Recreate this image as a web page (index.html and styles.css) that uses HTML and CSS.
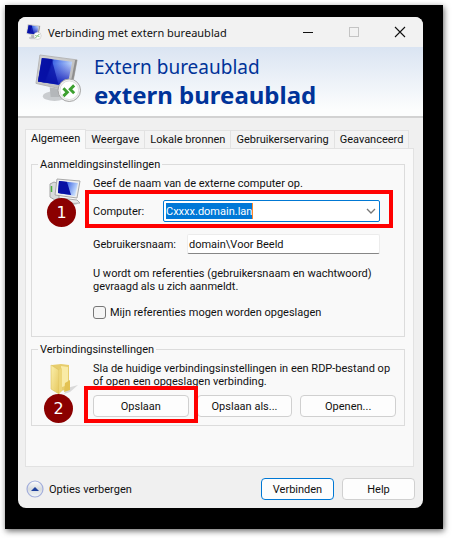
FILE: index.html
```html
<!DOCTYPE html>
<html lang="nl">
<head>
  <meta charset="UTF-8" />
  <title>Verbinding met extern bureaublad</title>
  <link rel="stylesheet" href="styles.css">
</head>
<body>
  <svg class="defs" width="0" height="0" aria-hidden="true">
    <defs>
      <linearGradient id="screenBlue" x1="0" y1="0" x2="1" y2="0.3">
        <stop offset="0" stop-color="#0a18b8" />
        <stop offset="0.4" stop-color="#0612a0" />
        <stop offset="0.45" stop-color="#3f67e4" />
        <stop offset="1" stop-color="#c4dbfd" />
      </linearGradient>
      <linearGradient id="screenDark" x1="0" y1="0" x2="0" y2="1">
        <stop offset="0.2" stop-color="#0000b0" stop-opacity="0" />
        <stop offset="1" stop-color="#0818b4" />
      </linearGradient>
      <linearGradient id="metal" x1="0" y1="0" x2="1" y2="1">
        <stop offset="0" stop-color="#d4d4d4" />
        <stop offset="1" stop-color="#b8b8b8" />
      </linearGradient>
      <linearGradient id="folderFront" x1="0" y1="0" x2="1" y2="1">
        <stop offset="0" stop-color="#fbf0ad" />
        <stop offset="1" stop-color="#e6c75c" />
      </linearGradient>
      <linearGradient id="roundButton" x1="0" y1="0" x2="0" y2="1">
        <stop offset="0" stop-color="#ffffff" />
        <stop offset="0.5" stop-color="#d6dade" />
        <stop offset="1" stop-color="#f4f8fa" />
      </linearGradient>
      <symbol id="rdp" viewBox="0 0 48 50">
        <ellipse cx="20" cy="43" rx="12" ry="5" fill="#c9cccf" />
        <path d="M15 34l12 2 1 8h-12z" fill="#b4b7ba" />
        <path d="M5 1l38 5-6 32L1 30z" fill="url(#metal)" stroke="#b5b5b5" />
        <path d="M43 6l-2 0-6 31 2 1z" fill="#8e8e8e" />
        <path d="M7 4l31 4-5 25L3 28z" fill="url(#screenBlue)" />
        <path d="M7 4l31 4-5 25L3 28z" fill="url(#screenDark)" />
        <path d="M7 4l10 1 7 26L3 28z" fill="#0710a4" opacity="0.75" />
        <circle cx="35" cy="37" r="11.5" fill="#f1f1f1" stroke="#a3a3a3" />
        <circle cx="35" cy="37" r="9.5" fill="#fff" stroke="#dedede" />
        <path d="M29 35l4 4-4 4M40 32l-4 4 4 4" fill="none" stroke="#3da02f" stroke-width="3" />
      </symbol>
    </defs>
  </svg>

  <div class="desktop">
    <main class="window">
      <header class="titlebar">
        <svg class="app-icon"><use href="#rdp" /></svg>
        <span class="caption">Verbinding met extern bureaublad</span>
        <button class="win-btn" aria-label="Minimaliseren">
          <svg width="12" height="12"><path d="M1 6.5h10" stroke="#111" /></svg>
        </button>
        <button class="win-btn" aria-label="Maximaliseren" disabled>
          <svg width="12" height="12"><rect x="1.5" y="1.5" width="9" height="9" fill="none" stroke="#c4c4c4" /></svg>
        </button>
        <button class="win-btn" aria-label="Sluiten">
          <svg width="12" height="12"><path d="M1 1l10 10M11 1L1 11" stroke="#111" stroke-width="1.1" /></svg>
        </button>
      </header>

      <div class="banner">
        <svg class="banner-icon"><use href="#rdp" /></svg>
        <h1>Extern bureaublad <strong>extern bureaublad</strong></h1>
      </div>

      <div class="tabs" role="tablist">
        <button class="tab active" role="tab" aria-selected="true">Algemeen</button>
        <button class="tab" role="tab">Weergave</button>
        <button class="tab" role="tab">Lokale bronnen</button>
        <button class="tab" role="tab">Gebruikerservaring</button>
        <button class="tab" role="tab">Geavanceerd</button>
      </div>

      <div class="panel" role="tabpanel">
        <fieldset class="group">
          <legend>Aanmeldingsinstellingen</legend>
          <div class="icon-cell">
            <svg class="pc-icon" width="32" height="28" viewBox="0 0 32 28">
              <ellipse cx="17" cy="25" rx="12" ry="3" fill="#d2d2d2" />
              <path d="M1 6l4-2 5 2v14l-4 2-5-3z" fill="#d9dbdc" stroke="#a5a5a5" />
              <path d="M2.5 8v6" stroke="#4cae3f" stroke-width="1.5" />
              <path d="M8 1l23 2-3 17-22-3z" fill="#efefef" stroke="#a9a9a9" />
              <path d="M10 3l19 2-3 13-17-3z" fill="url(#screenBlue)" />
              <path d="M10 3l8 1 4 13-13-2z" fill="#0710a4" />
              <path d="M10 20l18 2 3 3-18 1z" fill="#e9e9e9" stroke="#adadad" />
            </svg>
            <span class="step">1</span>
          </div>
          <div class="fields">
            <p class="intro">Geef de naam van de externe computer op.</p>
            <div class="row marked">
              <label class="computer-label" for="computer">Computer:</label>
              <div class="combo">
                <input id="computer" type="text" value="Cxxxx.domain.lan" size="14">
                <button class="arrow" aria-label="Lijst openen">
                  <svg width="10" height="6"><path d="M1 1l4 4 4-4" fill="none" stroke="#777" stroke-width="1.3" /></svg>
                </button>
              </div>
            </div>
            <div class="row">
              <label class="user-label" for="user">Gebruikersnaam:</label>
              <input class="textbox" id="user" type="text" value="domain\Voor Beeld">
            </div>
            <p class="note">U wordt om referenties (gebruikersnaam en wachtwoord)<br>gevraagd als u zich aanmeldt.</p>
            <label class="check"><input type="checkbox"> Mijn referenties mogen worden opgeslagen</label>
          </div>
        </fieldset>

        <fieldset class="group group-connection">
          <legend>Verbindingsinstellingen</legend>
          <div class="icon-cell">
            <svg class="folder-icon" width="30" height="32" viewBox="0 0 30 32">
              <path d="M18 25l11-3-8 7-6 2z" fill="#d9d9d9" />
              <path d="M3 2l9-1 8 1v24l-8 2-9-3z" fill="#e7cd6d" />
              <path d="M12 3l7 1v18l-6 2z" fill="#f9eba6" />
              <path d="M2 2l8 5v24l-8-5z" fill="url(#folderFront)" stroke="#dcbf5a" stroke-width="0.6" />
              <path d="M10 7l3-2v23l-3 3z" fill="#edd678" />
              <path d="M16 20l5-3v10l-6 2z" fill="#e3c252" />
            </svg>
            <span class="step">2</span>
          </div>
          <div class="fields">
            <p class="save-note">Sla de huidige verbindingsinstellingen in een RDP-bestand op<br>of open een opgeslagen verbinding.</p>
            <div class="buttons">
              <div class="marked"><button class="btn">Opslaan</button></div>
              <button class="btn">Opslaan als...</button>
              <button class="btn">Openen...</button>
            </div>
          </div>
        </fieldset>
      </div>

      <footer class="footer">
        <button class="options">
          <svg width="18" height="18" viewBox="0 0 18 18">
            <circle cx="9" cy="9" r="8" fill="url(#roundButton)" stroke="#a3aedb" stroke-width="1.2" />
            <path d="M5 11l4-4 4 4z" fill="#1d3f9c" />
          </svg>
          Opties verbergen
        </button>
        <button class="btn primary">Verbinden</button>
        <button class="btn">Help</button>
      </footer>
    </main>
  </div>
</body>
</html>
```

FILE: styles.css
```css
* {
  box-sizing: border-box;
}
body {
  margin: 0;
  padding: 5px 9px 9px 5px;
  background: #fff;
  color: #111;
  font-family: Roboto, "Liberation Sans", Arial, sans-serif;
  font-size: 11px;
  line-height: 13px;
}
button, input {
  font: inherit;
  color: inherit;
}
button {
  padding: 0;
  border: none;
  background: none;
}
p {
  margin: 0;
}
svg {
  display: block;
  flex: none;
}
.defs {
  position: absolute;
}
.desktop {
  padding: 12px 20px 21px 13px;
  background: #000;
  box-shadow: 1px 2px 6px rgba(0, 0, 0, 0.6);
}
.window {
  background: #f0f0f0;
  border-radius: 8px;
  overflow: hidden;
}

/* title bar */
.titlebar {
  display: flex;
  align-items: center;
  height: 30px;
  padding-left: 8px;
  background: #f2f2f2;
}
.app-icon {
  width: 16px;
  height: 16px;
}
.caption {
  flex: 1;
  padding-left: 6px;
  font-family: "Noto Sans", sans-serif;
  font-size: 11px;
  white-space: nowrap;
}
.win-btn {
  display: flex;
  justify-content: center;
  align-items: center;
  width: 46px;
  height: 30px;
}

/* banner */
.banner {
  display: flex;
  gap: 12px;
  height: 71px;
  padding: 7px 17px 0;
  background: linear-gradient(#dae4f2, #fcfdfd 90%);
  border-bottom: 2px solid #d2d2d2;
}
.banner-icon {
  width: 47px;
  height: 49px;
}
h1 {
  margin: 0;
  color: #003399;
  font-family: "Noto Sans", sans-serif;
  font-size: 19px;
  font-weight: 400;
  line-height: 27px;
}
h1 strong {
  display: block;
  font-size: 24px;
}

/* tabs */
.tabs {
  display: flex;
  align-items: flex-end;
  padding: 11px 7px 0;
}
.tab {
  height: 18px;
  padding: 0 5px;
  background: #f3f3f3;
  border: 1px solid #e2e2e2;
  border-left: none;
  border-bottom: none;
  white-space: nowrap;
}
.tab.active {
  position: relative;
  height: 20px;
  margin-bottom: -1px;
  padding-bottom: 2px;
  border-left: 1px solid #e2e2e2;
  background: #f9f9f9;
}
.panel {
  margin: 0 9px 0 7px;
  padding: 9px 8px 40px 5px;
  background: #f9f9f9;
  border: 1px solid #e2e2e2;
}
.group {
  display: flex;
  min-width: 0;
  margin: 0;
  padding: 0 24px 17px 17px;
  border: 1px solid #dcdcdc;
}
.group-connection {
  margin-top: 6px;
  padding: 0 8px 8px 17px;
}
legend {
  margin-left: -11px;
  padding: 0 2px;
}
.icon-cell {
  position: relative;
  flex: none;
  width: 44px;
}
.pc-icon {
  margin-top: 7px;
}
.step {
  position: absolute;
  top: 27px;
  left: -2px;
  width: 29px;
  height: 29px;
  border-radius: 50%;
  background: #8b0000;
  color: #fff;
  font-family: "DejaVu Sans", sans-serif;
  font-size: 16px;
  line-height: 29px;
  text-align: center;
}
.group-connection .step {
  top: 38px;
  left: -5px;
}
.fields {
  flex: 1;
  min-width: 0;
}
.intro {
  padding: 6px 0 10px;
}
.row {
  display: flex;
  align-items: center;
  margin-bottom: 12px;
}
.computer-label {
  width: 70px;
}
.user-label {
  width: 94px;
}
.marked {
  position: relative;
}
/* red frame around the control of each step */
.marked::after {
  content: "";
  position: absolute;
  inset: -10px -13px -6px -8px;
  border: 4px solid #f00;
  pointer-events: none;
}
.buttons .marked::after {
  inset: -9px -9px -6px -9px;
}
.combo {
  display: flex;
  flex: 1;
  align-items: center;
  justify-content: space-between;
  height: 22px;
  padding: 0 3px 0 2px;
  background: #fff;
  border: 1px solid #0078d4;
  border-radius: 2px;
}
.combo input {
  field-sizing: content;
  height: 16px;
  padding: 0;
  border: none;
  border-right: 1px solid #ff8728;
  background: #0078d7;
  color: #fff;
}
.arrow {
  padding: 4px 0;
}
.textbox {
  flex: 1;
  min-width: 0;
  height: 20px;
  padding: 0 1px;
  background: #fff;
  border: 1px solid #ececec;
  border-bottom-color: #868686;
  border-radius: 2px;
}
.note {
  padding: 1px 0 13px;
}
.check {
  display: flex;
  align-items: center;
  gap: 4px;
}
.check input {
  appearance: none;
  width: 13px;
  height: 13px;
  margin: 0;
  background: #f5f5f5;
  border: 1px solid #777;
  border-radius: 3px;
}
.save-note {
  padding: 6px 0 7px;
  white-space: nowrap;
}
.folder-icon {
  margin-top: 7px;
}
.buttons {
  display: grid;
  grid-template-columns: repeat(3, 1fr);
  gap: 8px;
}
.btn {
  width: 100%;
  height: 22px;
  background: #fdfdfd;
  border: 1px solid #d0d0d0;
  border-radius: 4px;
}

/* footer */
.footer {
  display: flex;
  align-items: center;
  gap: 8px;
  padding: 11px 8px 8px;
}
.footer .btn {
  width: 73px;
}
.options {
  display: flex;
  align-items: center;
  gap: 5px;
  margin-right: auto;
}
.primary {
  border-color: #0078d4;
}
```
